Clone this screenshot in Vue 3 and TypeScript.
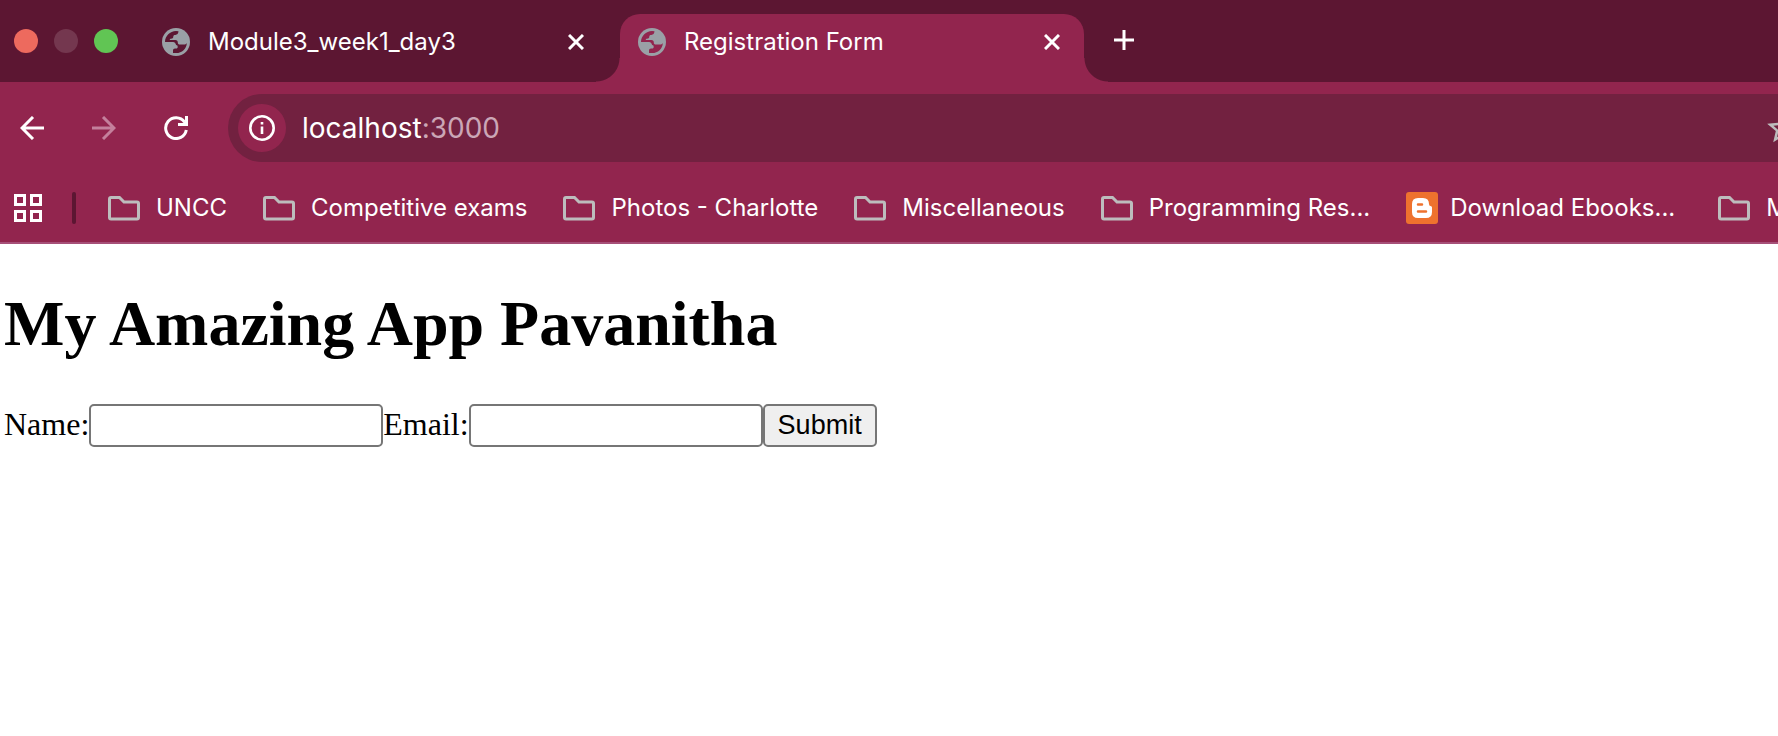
<script setup lang="ts">
import { ref } from 'vue'

interface Tab {
  title: string
  active: boolean
}

interface Bookmark {
  label: string
  kind: 'folder' | 'blogger'
}

const tabs: Tab[] = [
  { title: 'Module3_week1_day3', active: false },
  { title: 'Registration Form', active: true },
]

const bookmarks: Bookmark[] = [
  { label: 'UNCC', kind: 'folder' },
  { label: 'Competitive exams', kind: 'folder' },
  { label: 'Photos - Charlotte', kind: 'folder' },
  { label: 'Miscellaneous', kind: 'folder' },
  { label: 'Programming Res...', kind: 'folder' },
  { label: 'Download Ebooks...', kind: 'blogger' },
  { label: 'M', kind: 'folder' },
]

const name = ref('')
const email = ref('')
</script>

<template>
  <div class="browser">
    <header class="chrome">
      <div class="tab-strip">
        <div class="lights">
          <button class="light close" aria-label="Close window"></button>
          <button class="light minimize" aria-label="Minimize window"></button>
          <button class="light expand" aria-label="Expand window"></button>
        </div>
        <div v-for="tab in tabs" :key="tab.title" class="tab" :class="{ active: tab.active }">
          <svg class="globe" viewBox="0 0 28 28" aria-hidden="true">
            <circle cx="14" cy="14" r="14" fill="#9aa0a6" />
            <path
              class="globe-land"
              d="M16.500 3.300c-.2 2.300-1.200 3.600-3.200 3.600-1.500 0-2 .6-2 1.700 0 1.500-.8 2.200-2.300 2.200-.9 0-1.200.3-1.200 1.100h5.400c2 0 2.600 1 2.600 2.600 0 1.400.8 2.100 2.100 2.100h4.200c1.200 0 1.900-.7 2.700-1.700C24.600 20.800 20 25 14.200 25H11v-2.500c0-1.300.8-2 2-2h1.200c1 0 1.500-.6 1.500-1.500 0-1.200-.4-1.900-1.600-1.900-.6-1.600-1.200-3-3-3H3C3 8 8 3 14 3z"
            />
          </svg>
          <span class="tab-title">{{ tab.title }}</span>
          <button class="tab-close" :aria-label="`Close ${tab.title}`">
            <svg viewBox="0 0 16 16" aria-hidden="true">
              <path d="M1 1l14 14M15 1L1 15" fill="none" stroke="#fff" stroke-width="3" />
            </svg>
          </button>
        </div>
        <button class="new-tab" aria-label="New tab">
          <svg viewBox="0 0 20 20" aria-hidden="true">
            <path d="M10 0v20M0 10h20" fill="none" stroke="#fff" stroke-width="3" />
          </svg>
        </button>
      </div>

      <div class="toolbar">
        <nav class="nav-buttons">
          <button class="nav-button" aria-label="Back">
            <svg viewBox="0 0 24 24" aria-hidden="true">
              <path d="M24 12H2M13 1L2 12l11 11" fill="none" stroke="#fff" stroke-width="3" />
            </svg>
          </button>
          <button class="nav-button" aria-label="Forward" disabled>
            <svg viewBox="0 0 24 24" aria-hidden="true">
              <path d="M0 12h22M11 1l11 11-11 11" fill="none" stroke="#c4809c" stroke-width="3" />
            </svg>
          </button>
          <button class="nav-button" aria-label="Reload">
            <svg viewBox="0 0 24 24" aria-hidden="true">
              <path d="M20.500 6A10.400 10.400 0 1 0 22.300 14" fill="none" stroke="#fff" stroke-width="3" />
              <path d="M24 0v10H14V7h5l2-2V0z" fill="#fff" />
            </svg>
          </button>
        </nav>
        <div class="address">
          <button class="site-info" aria-label="View site information">
            <svg viewBox="0 0 26 26" aria-hidden="true">
              <circle cx="13" cy="13" r="11.700" fill="none" stroke="#fff" stroke-width="2.600" />
              <path d="M13 11.500V19M13 7v2.500" fill="none" stroke="#fff" stroke-width="2.600" />
            </svg>
          </button>
          <div class="url">localhost<span class="port">:3000</span></div>
          <button class="star" aria-label="Bookmark this tab">
            <svg viewBox="0 0 24 24" aria-hidden="true">
              <path
                fill="#bdbdbd"
                d="M22 9.240l-7.190-.620L12 2 9.190 8.630 2 9.240l5.460 4.730L5.820 21 12 17.270 18.180 21l-1.630-7.030L22 9.240zM12 15.400l-3.760 2.270 1-4.280-3.320-2.880 4.380-.380L12 6.100l1.710 4.040 4.380.380-3.320 2.880 1 4.280L12 15.400z"
              />
            </svg>
          </button>
        </div>
      </div>

      <div class="bookmarks">
        <button class="apps" aria-label="Apps">
          <svg viewBox="0 0 28 28" aria-hidden="true">
            <path
              d="M1.500 1.500h9v9h-9zM17.500 1.500h9v9h-9zM1.500 17.500h9v9h-9zM17.500 17.500h9v9h-9z"
              fill="none"
              stroke="#fff"
              stroke-width="3"
            />
          </svg>
        </button>
        <span class="divider"></span>
        <a v-for="item in bookmarks" :key="item.label" class="bookmark" :class="item.kind" href="#">
          <svg v-if="item.kind === 'folder'" viewBox="0 0 32 32" aria-hidden="true">
            <path
              d="M3 5.500h8.500l4.500 4.500h13q1.500 0 1.500 1.500v14q0 1.500-1.500 1.500H3q-1.500 0-1.500-1.500V7q0-1.500 1.500-1.500z"
              fill="none"
              stroke="#bdbdbd"
              stroke-width="3"
            />
          </svg>
          <svg v-else viewBox="0 0 32 32" aria-hidden="true">
            <rect width="32" height="32" rx="3" fill="#ee722e" />
            <path
              d="M12 6h5q6 0 6 6 0 2 1.500 2 1.500 0 1.500 1.500V20q0 6-6 6h-8q-6 0-6-6v-8q0-6 6-6z"
              fill="#fff"
            />
            <path d="M12 12.500h4M12 19.500h8" stroke="#ee722e" stroke-width="2.500" stroke-linecap="round" />
          </svg>
          <span>{{ item.label }}</span>
        </a>
      </div>
    </header>

    <main class="page">
      <h1>My Amazing App Pavanitha</h1>
      <form class="form" @submit.prevent>
        <label for="name">Name:</label>
        <input id="name" v-model="name" type="text" />
        <label for="email">Email:</label>
        <input id="email" v-model="email" type="text" />
        <button type="submit">Submit</button>
      </form>
    </main>
  </div>
</template>

<style>
body {
  margin: 0;
  background: #fff;
}
</style>

<style scoped>
.browser {
  overflow: hidden;
}

.chrome {
  background: #92254e;
  border-bottom: 2px solid #a65078;
  color: #fff;
  font-family: Inter, "Liberation Sans", sans-serif;
  font-size: 24px;
}

.chrome button {
  flex: none;
  padding: 0;
  border: 0;
  background: none;
}

.chrome svg {
  display: block;
  flex: none;
}

.tab-strip {
  display: flex;
  align-items: flex-end;
  height: 68px;
  padding: 14px 0 0 14px;
  background: #5c1632;
}

.lights {
  display: flex;
  align-self: flex-start;
  gap: 16px;
  margin: 15px 26px 0 0;
}

.chrome .light {
  width: 24px;
  height: 24px;
  border-radius: 50%;
}

.chrome .close {
  background: #ed6a5e;
}

.chrome .minimize {
  background: #74374f;
}

.chrome .expand {
  background: #61c554;
}

.tab {
  position: relative;
  display: flex;
  flex: 0 1 464px;
  align-items: center;
  box-sizing: border-box;
  min-width: 0;
  height: 68px;
  padding: 0 24px 12px 18px;
}

.tab + .tab {
  margin-left: 12px;
}

.tab.active {
  border-radius: 20px 20px 0 0;
  background: #92254e;
}

.tab.active::before,
.tab.active::after {
  content: "";
  position: absolute;
  bottom: 0;
  width: 24px;
  height: 24px;
}

.tab.active::before {
  right: 100%;
  background: radial-gradient(circle at 0 0, #5c1632 23px, #92254e 24px);
}

.tab.active::after {
  left: 100%;
  background: radial-gradient(circle at 100% 0, #5c1632 23px, #92254e 24px);
}

.globe {
  width: 28px;
  height: 28px;
}

.globe-land {
  fill: #5c1632;
}

.active .globe-land {
  fill: #92254e;
}

.tab-title {
  flex: 1;
  min-width: 0;
  margin-left: 18px;
  overflow: hidden;
  line-height: 32px;
  white-space: nowrap;
}

.tab-close svg {
  width: 16px;
  height: 16px;
}

.chrome .new-tab {
  align-self: flex-start;
  margin: 16px 0 0 30px;
}

.new-tab svg {
  width: 20px;
  height: 20px;
}

.toolbar {
  display: flex;
  align-items: center;
  padding: 12px 0 12px 20px;
}

.nav-buttons {
  display: flex;
  gap: 48px;
  margin-right: 40px;
}

.nav-button svg {
  width: 24px;
  height: 24px;
}

.address {
  display: flex;
  flex: 1;
  align-items: center;
  min-width: 0;
  height: 68px;
  padding-left: 10px;
  border-radius: 34px 0 0 34px;
  background: #722140;
}

.chrome .site-info {
  display: flex;
  align-items: center;
  justify-content: center;
  width: 48px;
  height: 48px;
  border-radius: 50%;
  background: #92254e;
}

.site-info svg {
  width: 26px;
  height: 26px;
}

.url {
  flex: 1;
  margin-left: 16px;
  font-size: 28px;
}

.port {
  color: #cba6b6;
}

.chrome .star {
  margin-right: -24px;
}

.star svg {
  width: 38px;
  height: 38px;
}

.bookmarks {
  display: flex;
  align-items: center;
  height: 68px;
  padding-left: 14px;
}

.apps svg {
  width: 28px;
  height: 28px;
}

.divider {
  flex: none;
  width: 4px;
  height: 32px;
  margin: 0 32px 0 30px;
  border-radius: 2px;
  background: #5c1632;
}

.bookmark {
  display: flex;
  flex: none;
  align-items: center;
  gap: 16px;
  margin-right: 36px;
  color: inherit;
  line-height: 28px;
  text-decoration: none;
  white-space: nowrap;
}

.bookmark.blogger {
  gap: 12px;
  margin-right: 43px;
}

.bookmark svg {
  width: 32px;
  height: 32px;
}

.page {
  padding: 43px 4px;
  color: #000;
  font-family: "Liberation Serif", "Times New Roman", serif;
  font-size: 32px;
}

h1 {
  margin: 0 0 43px;
  font-size: 64px;
  line-height: 74px;
}

.form {
  display: flex;
  flex-wrap: wrap;
  align-items: center;
}

.form label {
  padding-bottom: 4px;
  line-height: 36px;
}

.form input,
.form button {
  box-sizing: border-box;
  height: 43px;
  border: 2px solid #767676;
  border-radius: 5px;
  font-family: "Liberation Sans", Arial, sans-serif;
  font-size: 27px;
}

.form input {
  width: 294px;
  padding: 2px 4px;
  background: #fff;
}

.form button {
  padding: 0 13px;
  background: #efefef;
  color: #000;
}
</style>
